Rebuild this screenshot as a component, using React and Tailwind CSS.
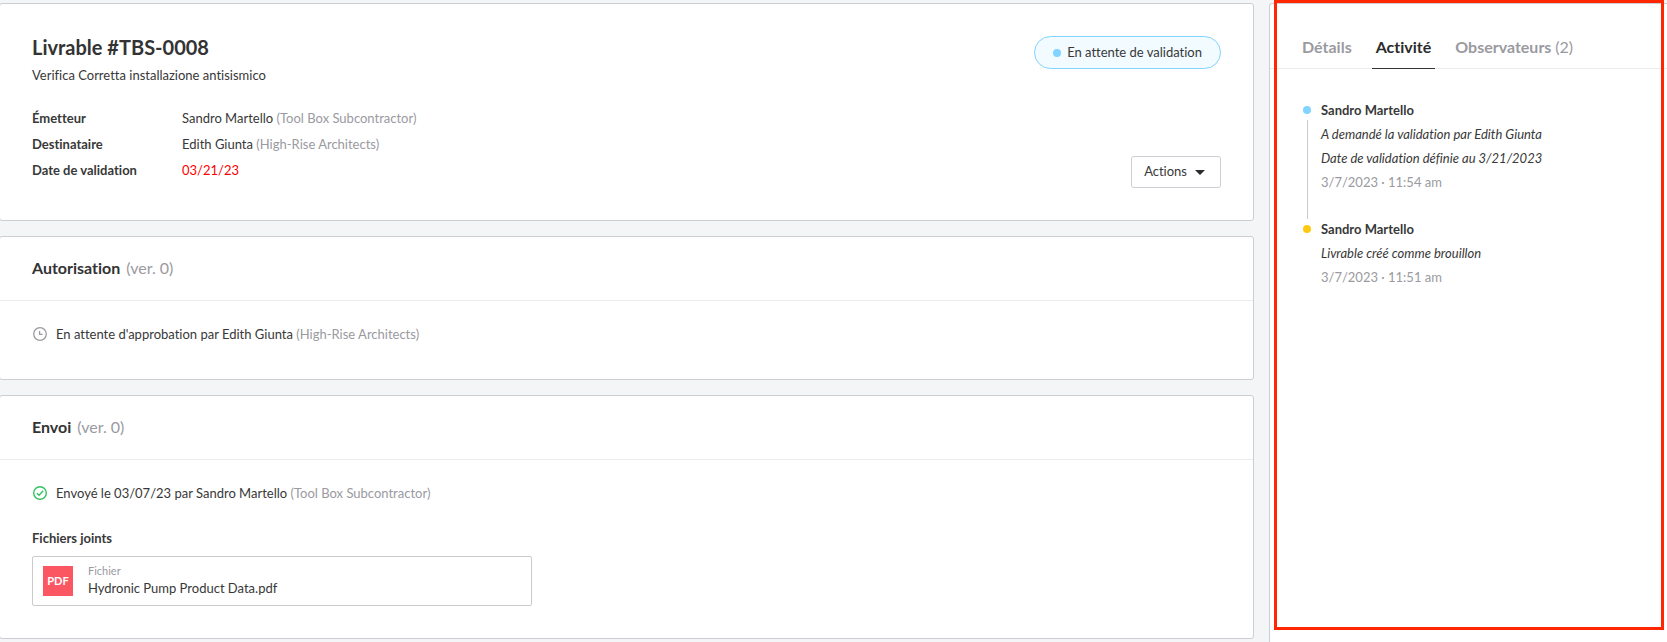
import React from "react";

function Card({ children }) {
  return (
    <section className="-ml-px rounded-[3px] border border-[#cdced4] bg-white">
      {children}
    </section>
  );
}

function CardHeader({ title, version }) {
  return (
    <h2 className="flex h-16 items-center gap-1.5 border-b border-[#ebebeb] px-8 pb-0.5 text-base font-bold text-[#333]">
      {title}
      <span className="font-normal text-[#9a9a9f]">({version})</span>
    </h2>
  );
}

function Company({ children }) {
  return <span className="text-[#9a9a9f]">({children})</span>;
}

function ClockIcon() {
  return (
    <svg className="size-4 shrink-0" viewBox="0 0 16 16" fill="none" stroke="#9a9a9f" strokeWidth="1.3" aria-hidden="true">
      <circle cx="8" cy="8" r="6.3" />
      <path d="M7.6 5v3.4h3" />
    </svg>
  );
}

function CheckIcon() {
  return (
    <svg className="size-4 shrink-0" viewBox="0 0 16 16" fill="none" stroke="#35c25e" strokeWidth="1.4" aria-hidden="true">
      <circle cx="8" cy="8" r="6.3" />
      <path d="M4.9 8.2l2.1 2.1 4.2-4.5" />
    </svg>
  );
}

const details = [
  { label: "Émetteur", value: "Sandro Martello", company: "Tool Box Subcontractor" },
  { label: "Destinataire", value: "Edith Giunta", company: "High-Rise Architects" },
  { label: "Date de validation", value: "03/21/23", late: true },
];

const activity = [
  {
    author: "Sandro Martello",
    lines: ["A demandé la validation par Edith Giunta", "Date de validation définie au 3/21/2023"],
    time: "3/7/2023 · 11:54 am",
    dot: "bg-[#80d4ff]",
  },
  {
    author: "Sandro Martello",
    lines: ["Livrable créé comme brouillon"],
    time: "3/7/2023 · 11:51 am",
    dot: "bg-[#ffc814]",
  },
];

function Tab({ active = false, children }) {
  return (
    <button
      type="button"
      role="tab"
      aria-selected={active}
      className={
        active
          ? "-mb-px border-b border-[#333] px-1 pt-[31px] pb-[9px] font-bold text-[#2b2b2b]"
          : "-mb-px border-b border-transparent px-1 pt-[31px] pb-[9px] font-bold text-[#9a9a9f]"
      }
    >
      {children}
    </button>
  );
}

export default function App() {
  return (
    <div className="relative flex min-h-screen gap-[15px] overflow-x-hidden bg-[#f4f5f7] pt-[3px] font-['Lato',sans-serif] text-[13px] text-[#383838] [font-variant-ligatures:none]">
      <main className="flex min-w-0 flex-1 flex-col gap-[15px] pb-[3px]">
        <Card>
          <div className="flex justify-between p-8">
            <div>
              <h1 className="text-xl leading-[22px] font-bold text-[#333]">Livrable #TBS-0008</h1>
              <p className="mt-1.5 leading-[22px]">Verifica Corretta installazione antisismico</p>
              <dl className="mt-[19px] grid grid-cols-[150px_auto] pb-[5px] leading-[26px]">
                {details.map((d) => (
                  <React.Fragment key={d.label}>
                    <dt className="font-bold">{d.label}</dt>
                    <dd className={d.late ? "text-[#ff0000]" : ""}>
                      {d.value} {d.company && <Company>{d.company}</Company>}
                    </dd>
                  </React.Fragment>
                ))}
              </dl>
            </div>
            <div className="flex flex-col items-end justify-between">
              <span className="flex h-[33px] items-center gap-1.5 rounded-full border border-[#80d4ff] bg-[#f2fbff] px-[18px]">
                <span className="size-2 rounded-full bg-[#80d4ff]" />
                En attente de validation
              </span>
              <button type="button" className="flex h-8 items-center gap-2 rounded-[3px] border border-[#cdced4] bg-white pr-[15px] pl-3">
                Actions
                <svg className="h-[5px] w-2.5" viewBox="0 0 10 5" fill="#2b2b2b" aria-hidden="true">
                  <path d="M0 0h10L5 5z" />
                </svg>
              </button>
            </div>
          </div>
        </Card>

        <Card>
          <CardHeader title="Autorisation" version="ver. 0" />
          <div className="px-8 pt-[22px] pb-[34px]">
            <p className="flex items-center gap-2 leading-[22px]">
              <ClockIcon />
              <span>
                En attente d'approbation par Edith Giunta <Company>High-Rise Architects</Company>
              </span>
            </p>
          </div>
        </Card>

        <Card>
          <CardHeader title="Envoi" version="ver. 0" />
          <div className="px-8 pt-[22px] pb-8">
            <p className="flex items-center gap-2 leading-[22px]">
              <CheckIcon />
              <span>
                Envoyé le 03/07/23 par Sandro Martello <Company>Tool Box Subcontractor</Company>
              </span>
            </p>
            <h3 className="mt-[23px] leading-[22px] font-bold">Fichiers joints</h3>
            <a href="#fichier" className="mt-[7px] flex h-[50px] max-w-[500px] items-center gap-[15px] rounded-xs border border-[#cbcbcd] px-2.5">
              <span className="flex size-[30px] items-center justify-center bg-[#fb5763] text-[11px] font-bold text-white">PDF</span>
              <span className="flex flex-col pb-0.5">
                <span className="text-[11px] leading-4 text-[#9a9a9f]">Fichier</span>
                <span className="leading-[18px]">Hydronic Pump Product Data.pdf</span>
              </span>
            </a>
          </div>
        </Card>
      </main>

      <aside className="w-[398px] shrink-0 rounded-tl-[3px] border-t border-l border-[#cdced4] bg-white">
        <div role="tablist" className="flex gap-4 border-b border-[#ebebeb] pl-7 text-base">
          <Tab>Détails</Tab>
          <Tab active>Activité</Tab>
          <Tab>
            Observateurs <span className="font-normal">(2)</span>
          </Tab>
        </div>
        <ol className="pt-[29px] pl-[33px] leading-6">
          {activity.map((a, i) => (
            <li key={a.time} className="flex gap-2.5">
              <div className="flex w-2 flex-col items-center pt-2">
                <span className={`size-2 rounded-full ${a.dot}`} />
                {i < activity.length - 1 && <span className="mt-1.5 -mb-0.5 w-px flex-1 bg-[#cbcbcd]" />}
              </div>
              <div className="pb-[23px]">
                <p className="font-bold">{a.author}</p>
                {a.lines.map((l) => (
                  <p key={l} className="italic">{l}</p>
                ))}
                <p className="text-[#9a9a9f]">{a.time}</p>
              </div>
            </li>
          ))}
        </ol>
      </aside>

      <div className="pointer-events-none absolute top-0 right-[3px] bottom-3 w-[390px] border-3 border-[#ff2600]" />
    </div>
  );
}
